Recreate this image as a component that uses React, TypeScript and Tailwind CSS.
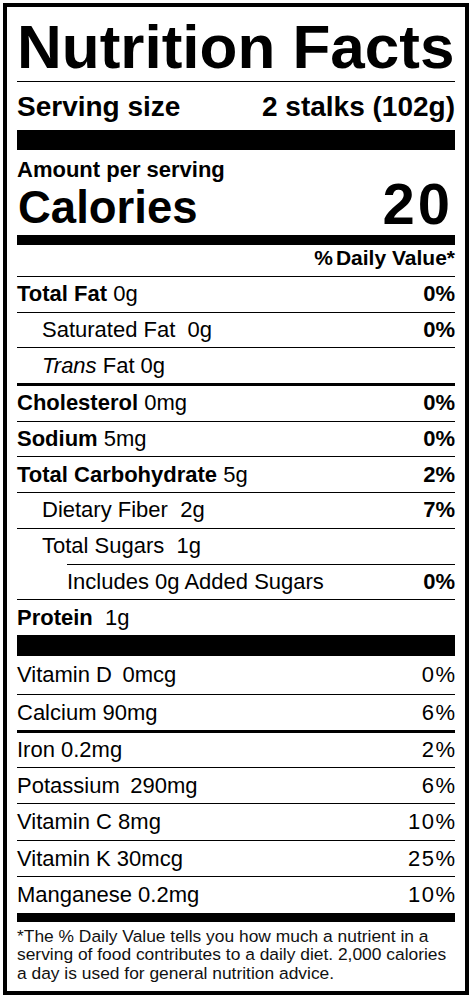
import React from "react";

type RowProps = {
  label: React.ReactNode;
  dv?: string;
  className: string;
  lower?: boolean;
};

// one line of the label: name + amount on the left, % daily value on the right
function Row({ label, dv, className, lower }: RowProps) {
  return (
    <div
      className={`flex items-center justify-between text-[22px] leading-[26px] whitespace-nowrap ${className}`}
    >
      <span>{label}</span>
      {dv && (
        <span className={lower ? "tracking-[1.5px] -mr-[1.5px]" : "font-bold"}>
          {dv}
        </span>
      )}
    </div>
  );
}

const App: React.FC = () => {
  return (
    <div className="bg-white min-h-[998px] pt-[3px] pl-[3px]">
      <div className="font-['Liberation_Sans',Arial,Helvetica,sans-serif] text-black w-[466px] h-[992px] border-4 border-black px-[10px] flex flex-col box-border">
        <div className="pt-[5px] text-[62px] leading-[69px] font-bold border-b border-black whitespace-nowrap">
          Nutrition Facts
        </div>

        <div className="h-[48px] pt-[2px] flex justify-between text-[28px] leading-[46px] font-bold whitespace-nowrap">
          <span>Serving size</span>
          <span>2 stalks (102g)</span>
        </div>
        <div className="h-[20px] bg-black" />

        <div className="pt-[7px] text-[22px] leading-[26px] font-bold">
          Amount per serving
        </div>
        <div className="h-[52px] flex justify-between items-start font-bold">
          <span className="text-[45.5px] leading-[50.8px] ml-[1px]">Calories</span>
          <span className="text-[58px] leading-[41.8px] tracking-[3px] mr-[2px]">20</span>
        </div>
        <div className="h-[10px] bg-black" />

        <div className="h-[31px] text-right text-[21px] leading-[26px] font-bold whitespace-nowrap">
          %<span className="ml-[3px]">Daily Value*</span>
        </div>

        <Row
          className="h-[35.7px] border-t border-black"
          label={<><b>Total Fat</b> 0g</>}
          dv="0%"
        />
        <Row
          className="h-[35.7px] border-t border-black pl-[25px]"
          label={"Saturated Fat\u00a0 0g"}
          dv="0%"
        />
        <Row
          className="h-[35.7px] border-t border-black pl-[25px]"
          label={<><i>Trans</i> Fat 0g</>}
        />
        <Row
          className="h-[37.7px] border-t-[3px] border-black"
          label={<><b>Cholesterol</b> 0mg</>}
          dv="0%"
        />
        <Row
          className="h-[35.7px] border-t border-black"
          label={<><b>Sodium</b> 5mg</>}
          dv="0%"
        />
        <Row
          className="h-[35.7px] border-t border-black"
          label={<><b>Total Carbohydrate</b> 5g</>}
          dv="2%"
        />
        <Row
          className="h-[35.7px] border-t border-black pl-[25px]"
          label={"Dietary Fiber\u00a0 2g"}
          dv="7%"
        />
        <Row
          className="h-[35.7px] border-t border-black pl-[25px]"
          label={"Total Sugars\u00a0 1g"}
        />
        <Row
          className="h-[35.7px] border-t border-black ml-[50px]"
          label="Includes 0g Added Sugars"
          dv="0%"
        />
        <Row
          className="h-[35.7px] border-t border-black"
          label={<><b>Protein</b>{"\u00a0 1g"}</>}
        />
        <div className="h-[21px] bg-black" />

        <Row className="h-[38px]" label={"Vitamin D\u2009 0mcg"} dv="0%" lower />
        <Row className="h-[36.5px] border-t border-black" label="Calcium 90mg" dv="6%" lower />
        <Row className="h-[36.5px] border-t-[3px] border-black" label="Iron 0.2mg" dv="2%" lower />
        <Row className="h-[36.5px] border-t border-black" label={"Potassium\u2009 290mg"} dv="6%" lower />
        <Row className="h-[36.5px] border-t border-black" label="Vitamin C 8mg" dv="10%" lower />
        <Row className="h-[36.5px] border-t border-black" label="Vitamin K 30mcg" dv="25%" lower />
        <Row className="h-[36.5px] border-t border-black" label="Manganese 0.2mg" dv="10%" lower />
        <div className="h-[9px] bg-black" />

        <div className="flex-1 pt-[5px] text-[17.4px] leading-[18.5px] text-[#111] whitespace-nowrap">
          <div>*The % Daily Value tells you how much a nutrient in a</div>
          <div>serving of food contributes to a daily diet. 2,000 calories</div>
          <div>a day is used for general nutrition advice.</div>
        </div>
      </div>
    </div>
  );
};

export default App;
